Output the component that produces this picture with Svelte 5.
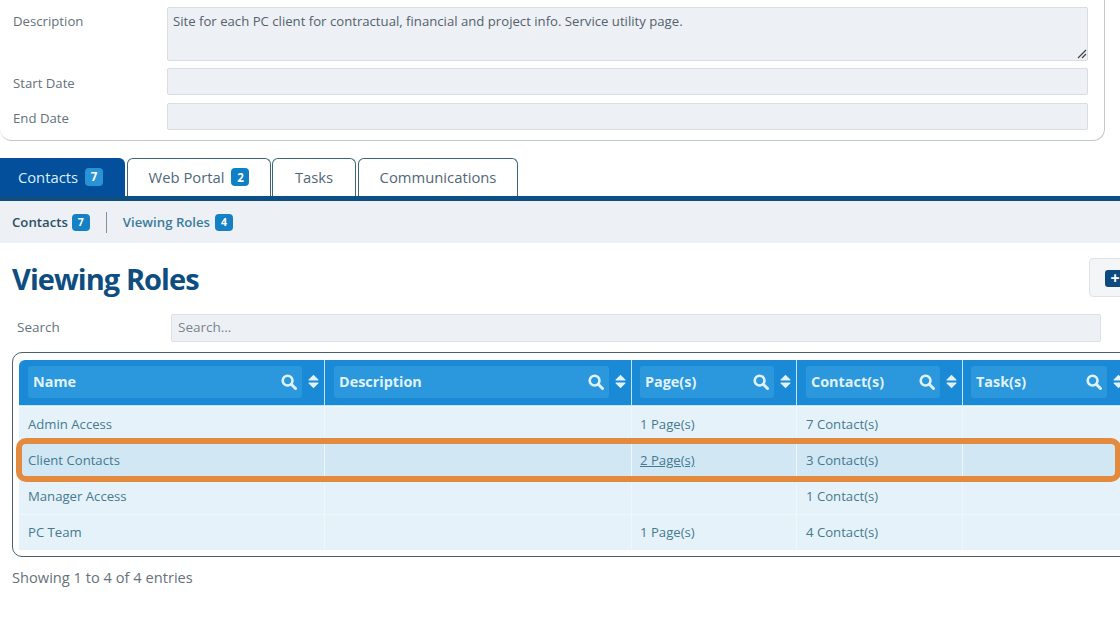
<script>
  const cols = [
    { name: 'Name', w: 306 },
    { name: 'Description', w: 307 },
    { name: 'Page(s)', w: 165 },
    { name: 'Contact(s)', w: 166 },
    { name: 'Task(s)', w: 166 }
  ];
  const rows = [
    { name: 'Admin Access', pages: '1 Page(s)', contacts: '7 Contact(s)' },
    { name: 'Client Contacts', pages: '2 Page(s)', contacts: '3 Contact(s)', active: true },
    { name: 'Manager Access', pages: '', contacts: '1 Contact(s)' },
    { name: 'PC Team', pages: '1 Page(s)', contacts: '4 Contact(s)' }
  ];
</script>

<div class="page">
  <section class="card">
    <div class="field tall">
      <span class="label">Description</span>
      <div class="input area">Site for each PC client for contractual, financial and project info. Service utility page.
        <svg class="grip" width="10" height="10" viewBox="0 0 10 10"><path d="M1 9 9 1M5 9 9 5" stroke="#444" stroke-width="1.2" fill="none"/></svg>
      </div>
    </div>
    <div class="field">
      <span class="label low">Start Date</span>
      <div class="input"></div>
    </div>
    <div class="field">
      <span class="label low">End Date</span>
      <div class="input"></div>
    </div>
  </section>

  <nav class="tabs">
    <div class="tab active t1">Contacts <b class="badge light">7</b></div>
    <div class="tab t2">Web Portal <b class="badge">2</b></div>
    <div class="tab t3">Tasks</div>
    <div class="tab t4">Communications</div>
  </nav>

  <nav class="subnav">
    <span class="sub current">Contacts <b class="mini">7</b></span>
    <span class="divider"></span>
    <span class="sub">Viewing Roles <b class="mini">4</b></span>
  </nav>

  <header class="head">
    <h1>Viewing Roles</h1>
    <div class="addbtn"><span class="plus">+</span></div>
  </header>

  <div class="searchrow">
    <span class="slabel">Search</span>
    <div class="sinput">Search...</div>
  </div>

  <div class="tablewrap">
    <div class="table">
      <div class="thead">
        {#each cols as c}
          <div class="th" style="width:{c.w}px">
            <div class="thbox">
              <span>{c.name}</span>
              <svg class="mag" width="16" height="16" viewBox="0 0 16 16"><circle cx="6.600" cy="6.600" r="4.900" fill="none" stroke="#dff1fb" stroke-width="2.600"/><path d="M10.300 10.300 14.500 14.500" stroke="#dff1fb" stroke-width="3" stroke-linecap="round"/></svg>
            </div>
            <svg class="sort" width="11" height="15" viewBox="0 0 11 15"><path fill="#dff1fb" d="M5.500 .8 10.300 5.600c.4.400.1 1-.4 1H1.100c-.5 0-.8-.6-.4-1zM5.500 14.200.7 9.400c-.4-.4-.1-1 .4-1h8.800c.5 0 .8.600.4 1z"/></svg>
          </div>
        {/each}
      </div>
      {#each rows as r}
        <div class="tr" class:on={r.active}>
          <div class="td" style="width:{cols[0].w}px">{r.name}</div>
          <div class="td" style="width:{cols[1].w}px"></div>
          <div class="td pages" style="width:{cols[2].w}px">{#if r.active}<u>{r.pages}</u>{:else}{r.pages}{/if}</div>
          <div class="td" style="width:{cols[3].w}px">{r.contacts}</div>
          <div class="td" style="width:{cols[4].w}px"></div>
        </div>
      {/each}
    </div>
    <div class="highlight"></div>
  </div>

  <p class="info">Showing 1 to 4 of 4 entries</p>
</div>

<style>
  :global(body) { margin: 0; background: #fff; overflow: hidden; }
  .page {
    width: 1120px; height: 625px; overflow: hidden;
    font-family: "Open Sans", "Noto Sans", sans-serif;
    font-size: 14px; color: #55656f;
  }
  .card {
    box-sizing: border-box; width: 1105px; height: 141px; padding: 7px 16px 0 13px;
    border: 1px solid #c4c8cc; border-width: 0 1px 1px 0; border-radius: 0 0 12px 12px;
    display: flex; flex-direction: column; gap: 8px;
  }
  .field { display: flex; align-items: flex-start; }
  .field.tall { margin-bottom: -1px; }
  .label { width: 154px; height: 27px; flex: none; line-height: 28px; font-size: 13.200px; color: #66727b; }
  .label.low { line-height: 30px; }
  .input {
    position: relative; box-sizing: border-box; width: 921px; height: 27px;
    background: #edf0f5; border: 1px solid #d9dde0; border-radius: 2px;
    font-size: 13.170px; color: #55626c; padding: 4px 5px;
  }
  .area { height: 54px; line-height: 20px; padding-top: 3px; }
  .grip { position: absolute; right: 0; bottom: 1px; }
  .tabs { display: flex; margin-top: 17px; height: 38px; gap: 1px; }
  .tab {
    box-sizing: border-box; height: 38px; display: flex; align-items: center; justify-content: center;
    gap: 7px; border: 1px solid #3f6678; border-bottom: 0; border-radius: 6px 6px 0 0;
    font-size: 14.800px; color: #51687a; background: #fff; padding-bottom: 1px;
  }
  .t1 { width: 125px; margin-right: 1px; padding-right: 4px; }
  .t2 { width: 144px; }
  .t3 { width: 84px; margin-right: 1px; }
  .t4 { width: 160px; }
  .tab.active { background: #034f9c; color: #d9f0fb; border: 0; border-radius: 0 6px 0 0; }
  .badge {
    display: inline-flex; align-items: center; justify-content: center; width: 18px; height: 18px;
    background: #0f7fc6; color: #fff; border-radius: 4px; font-size: 11.500px; font-weight: 700;
  }
  .badge.light { background: #2a93d6; }
  .subnav {
    display: flex; align-items: center; height: 42px; background: #edf0f5;
    border-top: 5px solid #0d4f82; padding-left: 12px;
  }
  .sub { font-size: 13.200px; font-weight: 600; color: #3a7c9c; display: flex; align-items: center; gap: 5px; }
  .sub.current { color: #2e4f66; gap: 4px; }
  .mini {
    display: inline-flex; align-items: center; justify-content: center; width: 18px; height: 17px;
    background: #1580c4; color: #fff; border-radius: 4px; font-size: 10.500px; font-weight: 700;
  }
  .divider { width: 1px; height: 21px; background: #7c93a3; margin: 0 16px; }
  .head { display: flex; align-items: center; justify-content: space-between; height: 71px; margin-right: -30px; }
  h1 {
    margin: 0 0 0 12px; font-size: 29px; font-weight: 700; color: #0e4d7f; letter-spacing: -.95px; line-height: 1;
  }
  .addbtn {
    box-sizing: border-box; width: 61px; height: 39px; background: #f3f5f7; border: 1px solid #e0e3e6;
    border-radius: 4px; padding: 11px 0 0 15px; margin-top: -2px;
  }
  .plus {
    display: block; width: 20px; height: 17px; background: #0d4a80; border-radius: 3px; color: #fff;
    font-size: 16px; font-weight: 700; line-height: 16px; text-align: center;
  }
  .searchrow { display: flex; align-items: center; height: 27px; }
  .slabel { width: 154px; margin-left: 17px; font-size: 13.500px; color: #66727b; margin-bottom: 2px; }
  .sinput {
    box-sizing: border-box; width: 930px; height: 28px; background: #edf0f5; border: 1px solid #dde1e4;
    border-radius: 2px; padding: 0 6px; line-height: 25px; font-size: 13.500px; color: #7a858e;
  }
  .tablewrap {
    position: relative; box-sizing: border-box; width: 1140px; height: 205px; margin: 11px 0 0 12px;
    border: 1px solid #47606c; border-radius: 10px; padding: 7px 0 0 6px;
  }
  .thead { box-sizing: border-box; display: flex; height: 46px; background: #1a8ad6; border-bottom: 1px solid #bfe6f5; border-radius: 6px 0 0 0; }
  .th {
    box-sizing: border-box; flex: none; position: relative; border-right: 1px solid #bfe6f5;
    padding: 6px 0 0 9px;
  }
  .th:nth-child(3), .th:nth-child(5) { padding-left: 8px; }
  .th:last-child { border-right: 0; }
  .thbox {
    box-sizing: border-box; height: 32px; margin-right: 22px; background: #2b97dc; border-radius: 3px;
    padding: 0 0 2px 5px; display: flex; align-items: center; justify-content: space-between;
    color: #e0f3fb; font-weight: 700; font-size: 14.400px;
  }
  .mag { margin: 2px 5px 0 0; }
  .sort { position: absolute; right: 5px; top: 14px; }
  .tr { display: flex; height: 36px; background: #e6f2f9; border-top: 1px solid #f0f7fb; box-sizing: border-box; }
  .tr.on { background: #d2e7f4; }
  .td {
    box-sizing: border-box; flex: none; border-right: 1px solid #f0f7fb; padding-left: 9px;
    line-height: 34px; font-size: 13.150px; color: #447a92;
  }
  .td.pages { padding-left: 8px; }
  .td:last-child { border-right: 0; }
  .highlight {
    position: absolute; left: 3px; top: 85px; width: 1093px; height: 32px;
    border: 6px solid #e38a3e; border-radius: 10px; pointer-events: none;
  }
  .info { margin: 10px 0 0 12px; font-size: 14.650px; color: #66727b; line-height: 20px; }
</style>
